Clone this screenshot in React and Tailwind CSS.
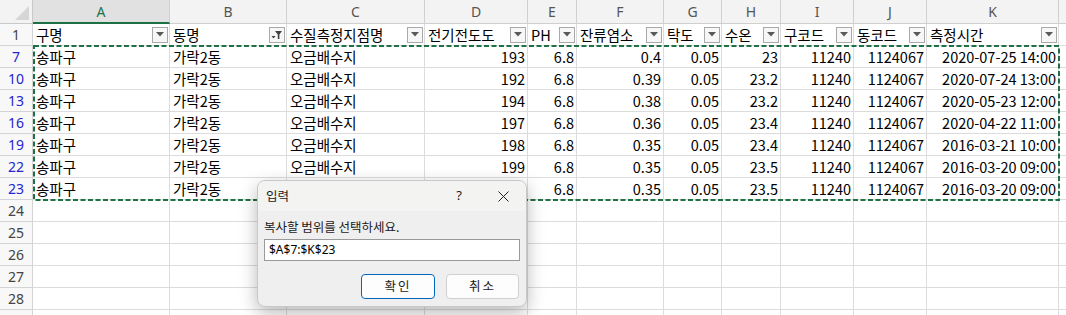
import React from "react";

const cols = [
  { key: "A", w: 137, title: "구명" },
  { key: "B", w: 117, title: "동명", filtered: true },
  { key: "C", w: 138, title: "수질측정지점명" },
  { key: "D", w: 103, title: "전기전도도" },
  { key: "E", w: 49, title: "PH" },
  { key: "F", w: 87, title: "잔류염소" },
  { key: "G", w: 58, title: "탁도" },
  { key: "H", w: 59, title: "수온" },
  { key: "I", w: 73, title: "구코드" },
  { key: "J", w: 73, title: "동코드" },
  { key: "K", w: 132, title: "측정시간" },
];

const rows = [
  ["7", ["송파구", "가락2동", "오금배수지", "193", "6.8", "0.4", "0.05", "23", "11240", "1124067", "2020-07-25 14:00"]],
  ["10", ["송파구", "가락2동", "오금배수지", "192", "6.8", "0.39", "0.05", "23.2", "11240", "1124067", "2020-07-24 13:00"]],
  ["13", ["송파구", "가락2동", "오금배수지", "194", "6.8", "0.38", "0.05", "23.2", "11240", "1124067", "2020-05-23 12:00"]],
  ["16", ["송파구", "가락2동", "오금배수지", "197", "6.8", "0.36", "0.05", "23.4", "11240", "1124067", "2020-04-22 11:00"]],
  ["19", ["송파구", "가락2동", "오금배수지", "198", "6.8", "0.35", "0.05", "23.4", "11240", "1124067", "2016-03-21 10:00"]],
  ["22", ["송파구", "가락2동", "오금배수지", "199", "6.8", "0.35", "0.05", "23.5", "11240", "1124067", "2016-03-20 09:00"]],
  ["23", ["송파구", "가락2동", "오금배수지", "199", "6.8", "0.35", "0.05", "23.5", "11240", "1124067", "2016-03-20 09:00"]],
];

// last one is only a sliver at the bottom edge, so no number shown
const emptyRows = ["24", "25", "26", "27", "28", ""];

const FilterBtn = ({ filtered }) => (
  <span className="flex h-[16px] w-[16px] shrink-0 items-center justify-center border border-[#a9a9a9] bg-[#f7f7f7]">
    {filtered ? (
      <svg width="12" height="10" viewBox="0 0 12 10">
        <path d="M4 1h7L8.4 4.5V9H6.8V4.5z" fill="#404040" />
        <path d="M0.5 6h4L2.5 8.5z" fill="#404040" />
      </svg>
    ) : (
      <svg width="8" height="5" viewBox="0 0 8 5">
        <path d="M0 0h8L4 4.5z" fill="#595959" />
      </svg>
    )}
  </span>
);

const cellFont = { fontFamily: '"Noto Sans CJK KR", "Noto Sans", sans-serif' };

export default function App() {
  return (
    <div
      className="relative h-[315px] w-[1066px] overflow-hidden bg-white text-[14.5px] text-black"
      style={cellFont}
    >
      <div className="grid grid-cols-[33px_137px_117px_138px_103px_49px_87px_58px_59px_73px_73px_132px_7px]">
        {/* column headers */}
        <div className="relative h-[24px] border-b border-r border-[#c9c9c9] bg-[#f3f3f3]">
          <svg className="absolute bottom-[3px] right-[3px]" width="14" height="14" viewBox="0 0 14 14">
            <path d="M14 0V14H0z" fill="#d6d6d6" />
          </svg>
        </div>
        {cols.map((c) =>
          c.key === "A" ? (
            <div
              key={c.key}
              className="flex h-[24px] items-center justify-center border-b-2 border-r border-b-[#1e7145] border-r-[#d0d0d0] bg-[#e1e1e1] font-['Noto_Sans'] text-[14px] text-[#1e7145]"
            >
              {c.key}
            </div>
          ) : (
            <div
              key={c.key}
              className="flex h-[24px] items-center justify-center border-b border-r border-[#d0d0d0] bg-[#f3f3f3] font-['Noto_Sans'] text-[14px] text-[#555]"
            >
              {c.key}
            </div>
          )
        )}
        <div className="h-[24px] border-b border-[#d0d0d0] bg-[#f3f3f3]" />

        {/* row 1: table header */}
        <div className="flex h-[22px] items-center justify-center border-b border-r border-[#d4d4d4] bg-[#f8f8f8] font-['Noto_Sans'] text-[14px] text-[#444]">
          1
        </div>
        {cols.map((c) => (
          <div
            key={c.key}
            className="flex h-[22px] items-center justify-between overflow-hidden whitespace-nowrap border-b border-r border-[#dcdcdc] pl-[3px] pr-[1px] leading-[20px]"
          >
            <span>{c.title}</span>
            <FilterBtn filtered={c.filtered} />
          </div>
        ))}
        <div className="h-[22px] border-b border-[#dcdcdc]" />

        {/* data rows */}
        {rows.map(([n, vals]) => (
          <React.Fragment key={n}>
            <div className="flex h-[22px] items-center justify-center border-b border-r border-[#d4d4d4] bg-[#f8f8f8] font-['Noto_Sans'] text-[14px] text-[#2424d0]">
              {n}
            </div>
            {vals.map((v, i) => (
              <div
                key={i}
                className={
                  i < 3
                    ? "flex h-[22px] items-center overflow-hidden whitespace-nowrap border-b border-r border-[#dcdcdc] pl-[3px] leading-[20px]"
                    : "flex h-[22px] items-center justify-end overflow-hidden whitespace-nowrap border-b border-r border-[#dcdcdc] pr-[2px] leading-[20px]"
                }
              >
                {v}
              </div>
            ))}
            <div className="h-[22px] border-b border-[#dcdcdc]" />
          </React.Fragment>
        ))}

        {/* empty rows */}
        {emptyRows.map((n, idx) => (
          <React.Fragment key={idx}>
            <div className="flex h-[22px] items-center justify-center border-b border-r border-[#d4d4d4] bg-[#f8f8f8] font-['Noto_Sans'] text-[14px] text-[#444]">
              {n}
            </div>
            {cols.map((c) => (
              <div key={c.key} className="h-[22px] border-b border-r border-[#dcdcdc]" />
            ))}
            <div className="h-[22px] border-b border-[#dcdcdc]" />
          </React.Fragment>
        ))}
      </div>

      {/* copy selection marquee */}
      <svg className="pointer-events-none absolute left-0 top-0" width="1066" height="315">
        <rect x="34" y="46" width="1025" height="154" fill="none" stroke="#1e7145" strokeWidth="2" strokeDasharray="5 2.5" />
      </svg>

      {/* input dialog */}
      <div className="absolute left-[257px] top-[180px] flex h-[127px] w-[270px] flex-col overflow-hidden rounded-lg border border-[#c8c8c8] bg-[#efefef] shadow-[0_6px_18px_rgba(0,0,0,0.28)]">
        <div className="flex h-[30px] items-center bg-[#f3f3f1] pl-[8px] text-[12.5px] text-[#1a1a1a]">
          <span className="flex-1">입력</span>
          <span className="mr-[36px] font-['Noto_Sans'] text-[13px]">?</span>
          <svg className="mr-[17px]" width="11" height="11" viewBox="0 0 11 11">
            <path d="M0.5 0.5l10 10M10.5 0.5l-10 10" stroke="#222" strokeWidth="1" />
          </svg>
        </div>
        <div className="flex flex-1 flex-col px-[6px] pt-[6px]">
          <div className="text-[12.5px] leading-[19px] text-[#1a1a1a]">복사할 범위를 선택하세요.</div>
          <div className="mt-[3px] flex h-[22px] items-center border border-[#9a9a9a] bg-white pl-[4px] font-['Noto_Sans'] text-[12px] text-black">
            $A$7:$K$23
          </div>
          <div className="mt-[13px] flex justify-end gap-[11px] pr-[1px]">
            <button className="flex h-[25px] w-[74px] items-center justify-center rounded-[4px] border border-[#0067c0] bg-[#fdfdfd] text-[12.5px] tracking-[2px] text-[#1a1a1a]">
              확인
            </button>
            <button className="flex h-[25px] w-[73px] items-center justify-center rounded-[4px] border border-[#d0d0d0] bg-[#fdfdfd] text-[12.5px] tracking-[2px] text-[#1a1a1a]">
              취소
            </button>
          </div>
        </div>
      </div>
    </div>
  );
}
